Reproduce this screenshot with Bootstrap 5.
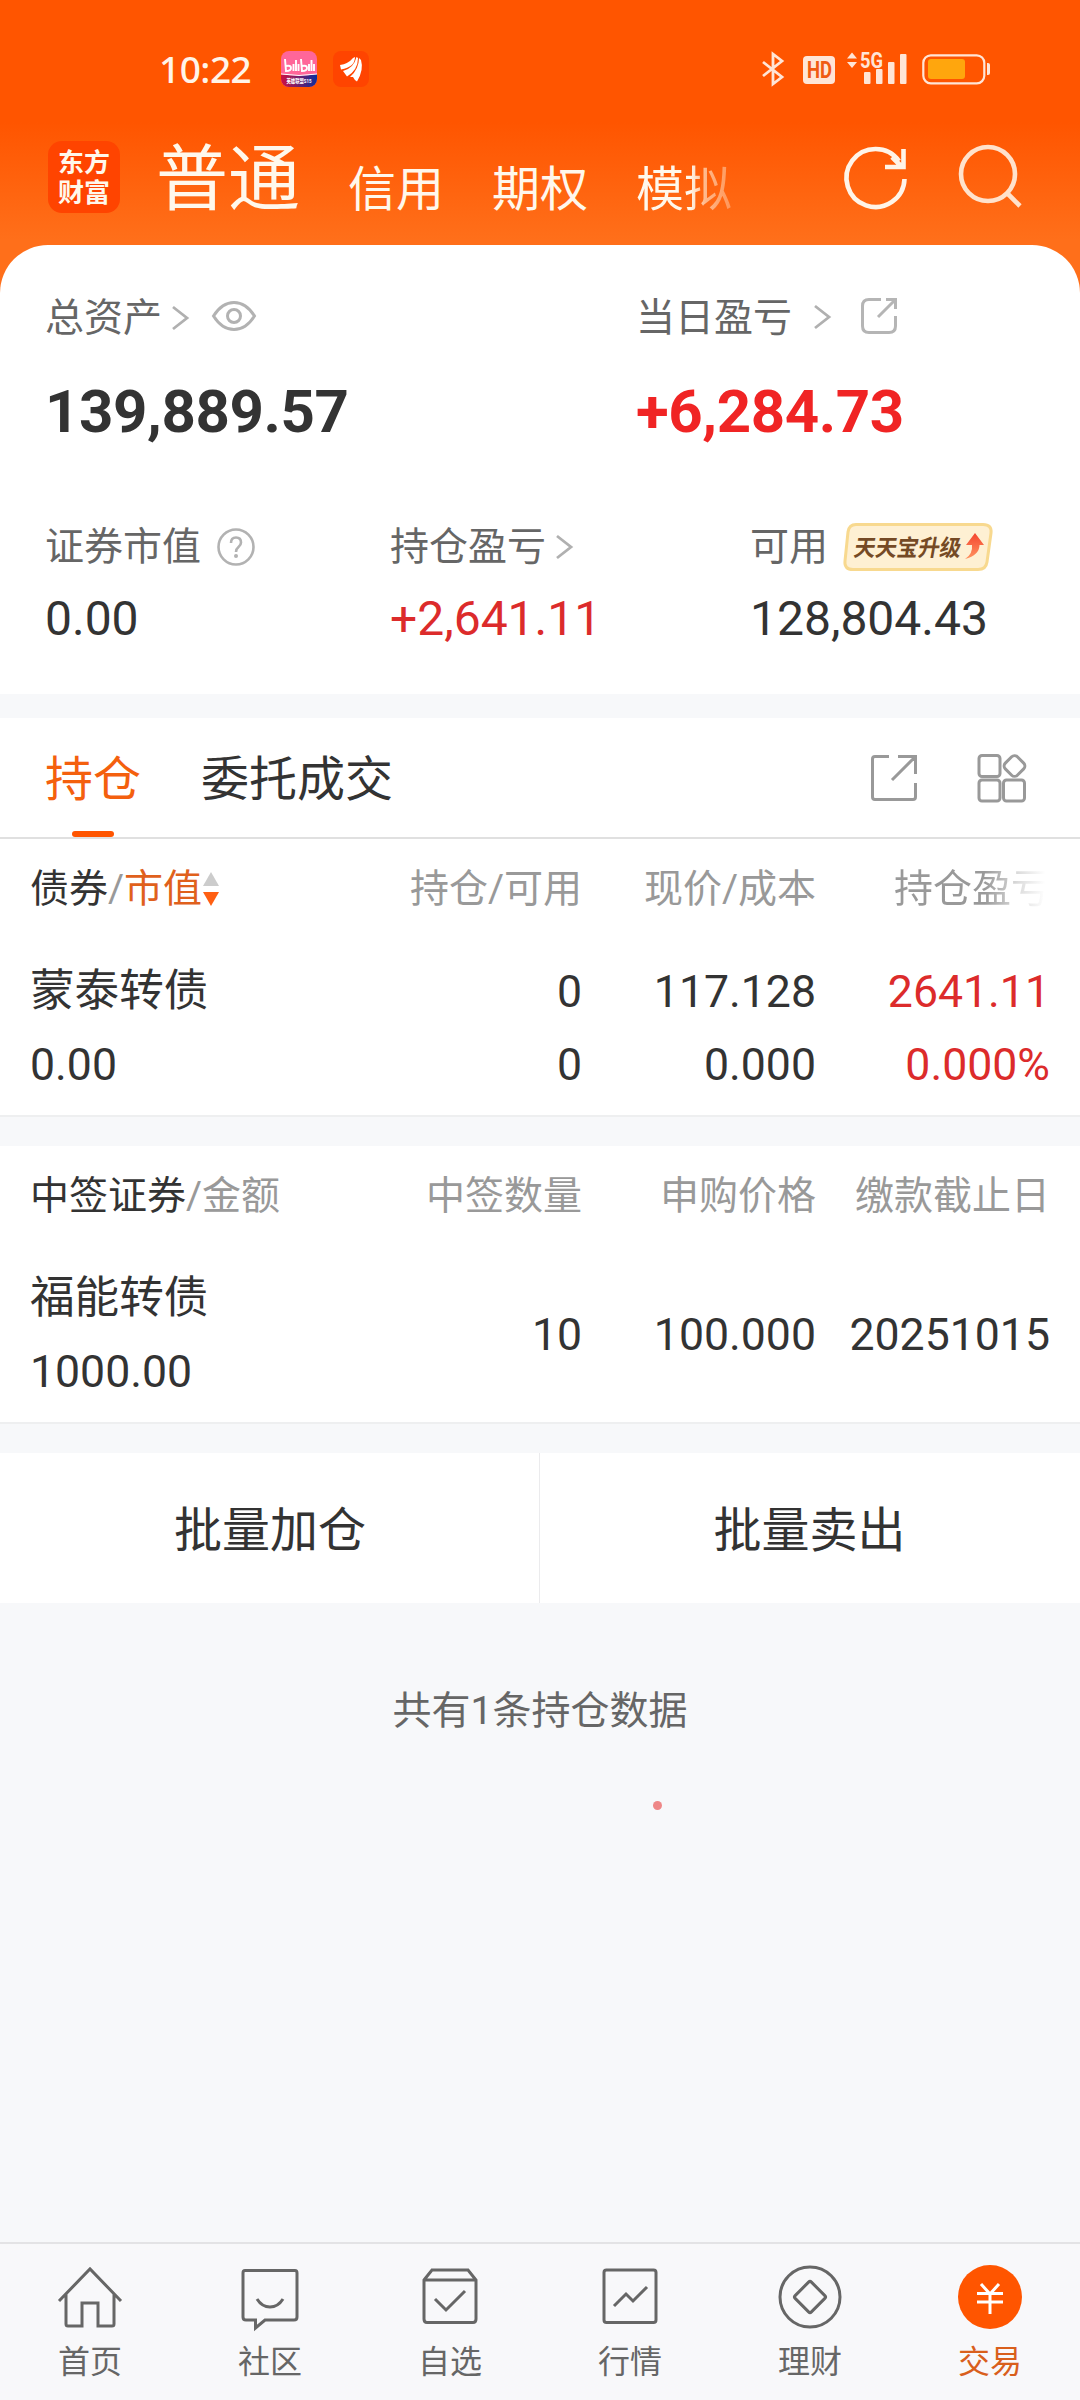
<!DOCTYPE html>
<html lang="zh-CN">
<head>
<meta charset="utf-8">
<meta name="viewport" content="width=device-width, initial-scale=1">
<title>交易</title>
<link href="https://cdn.jsdelivr.net/npm/bootstrap@5.3.0/dist/css/bootstrap.min.css" rel="stylesheet">
<style>
body{font-family:Roboto,"Noto Sans CJK SC",sans-serif;background:#f7f8fa;color:#333;width:1080px;height:2400px;font-size:39px;line-height:1;overflow:hidden;font-weight:400}
.app-top{height:245px;flex:none}
.app-shell{height:2400px;background:linear-gradient(#ff5500 0,#ff5500 122px,#ff6f1a 240px,#ff6f1a 300px,#f7f8fa 301px)}
.status-bar{height:86px;padding:51px 90px 0 159px;color:#fff4e8}
.clock{font:500 37px/36px "Noto Sans","Open Sans",sans-serif;width:122px;letter-spacing:-.5px}
.nav-row{height:159px;color:#fff8ec;padding:0 0 0 48px}
.brand-logo{width:72px;height:72px;border-radius:14px;background:#ff4400;font-size:26px;font-weight:700;line-height:30px;margin:55px 0 0;padding-top:7px;text-align:center}
.tab-main{font-size:72px;line-height:80px;margin:54px 0 0 36px;width:144px;white-space:nowrap}
.tab-sub{font-size:48px;line-height:56px;margin:76px 0 0 48px;width:96px;white-space:nowrap}
.tab-fade{background:linear-gradient(90deg,#fff8ec 56%,#ffb98c 72%,#ff9455 100%);-webkit-background-clip:text;background-clip:text;color:transparent}
.nav-icon-a{margin:59px 0 0 111px}.nav-icon-b{margin:59px 0 0 48px}
.sheet{height:449px;border-radius:48px 48px 0 0;background:#fff;flex:none;padding:52px 0 0 45px}
.col-total{width:591px}.col-a{width:345px}.col-b{width:360px}
.lbl{color:#666;height:42px;line-height:42px}
.sub-row{margin-top:84px}
.big-num{font-weight:700;font-size:60px;line-height:60px;margin-top:43px;letter-spacing:-.4px}
.mid-num{font-size:48px;line-height:48px;margin-top:27px}
.up{color:#dc2b2b}.up-strong{color:#f02424}
.gap-band{flex:none;background:#f7f8fa}
.gap-line{height:31px;border-top:2px solid #eeeff0}
.gap-top{height:24px}
.tab-strip{height:121px;border-bottom:2px solid #e0e0e0;flex:none;font-size:48px;padding:0 53px 0 45px;background:#fff}
.tab-txt{padding-top:5px}
.tab-active{color:#f4600e;position:relative}
.tab-active::after{content:"";position:absolute;left:27px;bottom:0;width:42px;height:6px;border-radius:3px;background:#ff5500}
.hold-table{display:grid;grid-template-columns:1fr 240px 234px 234px;background:#fff;padding:29px 30px 0;flex:none;height:276px;grid-template-rows:102px 73px 60px}
.hold-table>div{text-align:right;white-space:nowrap}
.hold-table>.c1{text-align:left}
.th{color:#999;line-height:42px;height:42px}
.td{font-size:44.600px;line-height:44px}
.nm{line-height:43px}
.td-mid{padding-top:36px}
.dk{color:#333}.og{color:#e0601c}
.fade-col{background:linear-gradient(90deg,#999 58%,#ddd 80%,#fff 97%);-webkit-background-clip:text;background-clip:text;color:transparent;width:156px;margin-left:auto}
.batch{height:150px;background:#fff;font-size:48px;flex:none}
.batch>div{width:50%;padding-top:6px}
.batch>div+div{border-left:1px solid #ebebed;margin-left:-1px}
.count-line{color:#666;margin-top:87px;line-height:42px}
.red-dot{width:9px;height:9px;border-radius:50%;background:#ee8787;margin:69px 0 0 653px}
.tab-bar{height:158px;border-top:2px solid #e3e3e5;background:#f8f8fa;font-size:32px;color:#666}
.tab-bar>div{width:180px;padding-top:21px}
.tab-bar svg{display:block;margin:0 1px 15px 0}
.nav-on{color:#d95f1c}
svg{flex:none;overflow:visible}
</style>
<script src="https://cdn.jsdelivr.net/npm/bootstrap@5.3.0/dist/js/bootstrap.bundle.min.js"></script>
</head>
<body>
<div class="app-shell d-flex flex-column">
 <header class="app-top">
  <div class="status-bar d-flex">
   <span class="clock">10:22</span>
   <svg width="36" height="36" viewBox="0 0 36 36"><defs><linearGradient id="bb"><stop offset="0" stop-color="#d01040"/><stop offset="1" stop-color="#0a2f9c"/></linearGradient><clipPath id="rc"><rect width="36" height="36" rx="8"/></clipPath></defs><g clip-path="url(#rc)"><rect width="36" height="36" fill="#ff6699"/><path d="M0 23q18 3 36 0v13H0z" fill="url(#bb)"/><path d="M0 23q18 3 36 0" stroke="#fff" fill="none"/></g><g fill="none" stroke="#fff" stroke-width="1.9"><path d="M4 8l1 12q5 0 5-3t-5-2M12.500 13v7M15 9v11M17.500 13v7M20 8l1 12q5 0 5-3t-5-2M28 13v7M30.500 9v11M33 13v7"/></g><text x="18" y="32" font-size="6" font-weight="700" fill="#fff" text-anchor="middle" textLength="25" lengthAdjust="spacingAndGlyphs">英雄联盟S15</text></svg>
   <svg class="ms-3" width="36" height="36" viewBox="0 0 36 36"><rect width="36" height="36" rx="8" fill="#ff4400"/><path fill="#fff" d="M7 14Q15 13 20 7L22 6Q22 16 8 18.500ZM10 20Q21 17 23.500 6L25 7Q25 19 14 25.500ZM17 26Q26 18 26 7L28 9Q31 19 24 30.500Q22 30 20 26Z"/></svg>
   <svg class="ms-auto" width="228" height="36" viewBox="0 0 228 36"><g fill="none" stroke="#ffe5d6" stroke-width="2.800"><path d="M1 11L20 26L11 33V3L20 10L1 25"/><rect x="161.300" y="4.300" width="61" height="28" rx="7.500" stroke-width="2.200"/></g><g fill="#ffe5d6"><rect x="41" y="5" width="32" height="28" rx="4"/><path d="M85 7.500L90 1.500L95 7.500ZM85 11L90 17L95 11Z"/><rect x="102" y="21" width="6.500" height="12" rx="1"/><rect x="114" y="18" width="6.500" height="15" rx="1"/><rect x="126" y="11" width="6.500" height="22" rx="1"/><rect x="138" y="3" width="6.500" height="30" rx="1"/><path d="M225 12h1q2 0 2 2v8q0 2-2 2h-1z"/><text x="98" y="17" font-size="22" font-weight="700" textLength="23" lengthAdjust="spacingAndGlyphs">5G</text></g><text x="45" y="27" font-size="23" font-weight="700" fill="#f05a12" textLength="25" lengthAdjust="spacingAndGlyphs">HD</text><rect x="166" y="8" width="37" height="20" rx="3" fill="#ffa60d"/></svg>
  </div>
  <div class="nav-row d-flex">
   <div class="brand-logo">东方<br>财富</div>
   <div class="tab-main">普通</div>
   <div class="tab-sub">信用</div><div class="tab-sub">期权</div><div class="tab-sub tab-fade">模拟</div>
   <svg class="nav-icon-a" width="66" height="66" viewBox="0 0 66 66" fill="none" stroke="#fff4e8" stroke-width="4.600"><path d="M61.500 34A29 29 0 1 1 56 16M60.500 4V22H42M49 12L59 22"/></svg>
   <svg class="nav-icon-b" width="66" height="66" viewBox="0 0 66 66" fill="none" stroke="#ffe2cc" stroke-width="4.600"><circle cx="31" cy="29" r="27"/><path d="M49 47L63 61"/></svg>
  </div>
 </header>
 <section class="sheet">
  <div class="d-flex">
   <div class="col-total">
    <div class="lbl d-flex align-items-center">总资产<svg style="margin-left:10px" width="16" height="24" viewBox="0 0 16 24" fill="none" stroke="#b0b0b0" stroke-width="2.800"><path d="M1 1L15 12L1 23"/></svg><svg style="margin:-5px 0 0 24px" width="44" height="30" viewBox="0 0 44 30" fill="none" stroke="#b2b2b2" stroke-width="3"><path d="M1.500 15Q10 1.500 22 1.500T42.500 15Q34 28.500 22 28.500T1.500 15Z"/><circle cx="22" cy="15" r="6.500"/></svg></div>
    <div class="big-num">139,889.57</div>
   </div>
   <div>
    <div class="lbl d-flex align-items-center">当日盈亏<svg style="margin:-3px 0 0 22px" width="16" height="24" viewBox="0 0 16 24" fill="none" stroke="#b0b0b0" stroke-width="2.800"><path d="M1 1L15 12L1 23"/></svg><svg style="margin:-4px 0 0 30px" width="38" height="38" viewBox="0 0 38 38" fill="none" stroke="#b5b5b5" stroke-width="3"><path d="M21 2.500H9Q2.500 2.500 2.500 9V29Q2.500 35.500 9 35.500H29Q35.500 35.500 35.500 29V19M26 2.500H35.500V12M35.500 2.500L18 20"/></svg></div>
    <div class="big-num up-strong">+6,284.73</div>
   </div>
  </div>
  <div class="d-flex sub-row">
   <div class="col-a"><div class="lbl d-flex align-items-center">证券市值<svg style="margin-left:16px" width="38" height="38" viewBox="0 0 38 38"><circle cx="19" cy="19" r="17.500" fill="none" stroke="#b2b2b2" stroke-width="2.600"/><path d="M14 15Q14 9.500 19 9.500T24 14.500Q24 17 21.500 19T19 24" fill="none" stroke="#b2b2b2" stroke-width="2.600"/><circle cx="19" cy="28" r="2" fill="#b2b2b2"/></svg></div></div>
   <div class="col-b"><div class="lbl d-flex align-items-center">持仓盈亏<svg style="margin-left:10px" width="16" height="24" viewBox="0 0 16 24" fill="none" stroke="#b0b0b0" stroke-width="2.800"><path d="M1 1L15 12L1 23"/></svg></div></div>
   <div class="lbl d-flex align-items-center">可用<svg style="margin-left:15px" width="150" height="50" viewBox="0 0 150 50"><defs><linearGradient id="ar" x2="0" y2="1"><stop stop-color="#f4452f"/><stop offset="1" stop-color="#ff9360"/></linearGradient></defs><path d="M13 2.500H140Q149 2.500 148 11L144 40Q143 47.500 135 47.500H10Q1 47.500 2 39L5 10Q6 2.500 13 2.500Z" fill="#fef0d3" stroke="#f8d98f" stroke-width="3"/><text transform="translate(10 33.500) skewX(-10)" font-size="23" font-weight="700" fill="#754a25" textLength="107" lengthAdjust="spacingAndGlyphs">天天宝升级</text><path d="M132 11L141 23H136.500Q136.500 33 122 37Q130 32 129 23H123Z" fill="url(#ar)"/></svg></div>
  </div>
  <div class="d-flex mid-num">
   <div class="col-a">0.00</div><div class="col-b up">+2,641.11</div><div>128,804.43</div>
  </div>
 </section>
 <div class="gap-band gap-top"></div>
 <div class="tab-strip d-flex align-items-stretch">
  <div class="tab-active tab-txt d-flex align-items-center">持仓</div>
  <div class="tab-txt d-flex align-items-center" style="margin-left:60px">委托成交</div>
  <div class="d-flex align-items-center ms-auto">
   <svg width="48" height="48" viewBox="0 0 48 48" fill="none" stroke="#999" stroke-width="3"><path d="M19 2.500H5Q2.500 2.500 2.500 5V43Q2.500 45.500 5 45.500H43Q45.500 45.500 45.500 43V29M28 2.500H45.500V20M45.500 2.500L22 26"/></svg>
   <svg style="margin-left:59px" width="50" height="50" viewBox="0 0 50 50" fill="none" stroke="#999" stroke-width="3"><rect x="2" y="2.500" width="21" height="21" rx="3"/><rect x="2" y="27" width="21" height="21" rx="3"/><rect x="26.500" y="27" width="21" height="21" rx="3"/><rect x="29" y="4.500" width="17" height="17" rx="4" transform="rotate(45 37.500 13)"/></svg>
  </div>
 </div>
 <div class="hold-table">
  <div class="c1 th d-flex align-items-center"><span class="dk">债券</span>/<span class="og">市值</span><svg width="18" height="36" viewBox="0 0 18 36"><path d="M1 15L9 1L17 15Z" fill="#ccc"/><path d="M1 21L9 35L17 21Z" fill="#ff5f12"/></svg></div>
  <div class="th">持仓/可用</div><div class="th">现价/成本</div><div class="th fade-col">持仓盈亏</div>
  <div class="c1 td nm">蒙泰转债</div><div class="td">0</div><div class="td">117.128</div><div class="td up">2641.11</div>
  <div class="c1 td">0.00</div><div class="td">0</div><div class="td">0.000</div><div class="td up">0.000%</div>
 </div>
 <div class="gap-band gap-line"></div>
 <div class="hold-table">
  <div class="c1 th"><span class="dk">中签证券</span>/金额</div><div class="th">中签数量</div><div class="th">申购价格</div><div class="th">缴款截止日</div>
  <div class="c1 td nm">福能转债</div><div class="td td-mid">10</div><div class="td td-mid">100.000</div><div class="td td-mid">20251015</div>
  <div class="c1 td">1000.00</div>
 </div>
 <div class="gap-band gap-line"></div>
 <div class="batch d-flex"><div class="d-flex align-items-center justify-content-center">批量加仓</div><div class="d-flex align-items-center justify-content-center">批量卖出</div></div>
 <div class="count-line text-center">共有1条持仓数据</div>
 <div class="red-dot"></div>
 <nav class="tab-bar d-flex mt-auto text-center">
  <div class="d-flex flex-column align-items-center"><svg width="66" height="66" viewBox="0 0 66 66" fill="none" stroke="#666" stroke-width="3"><path d="M2 36L33 4L64 36M9 29V59Q9 61 11 61H25V38H41V61H55Q57 61 57 59V29"/></svg>首页</div>
  <div class="d-flex flex-column align-items-center"><svg width="66" height="66" viewBox="0 0 66 66" fill="none" stroke="#666" stroke-width="3"><path d="M8 5.500H58Q60 5.500 60 8V52Q60 55 57 55H28L18.500 63V55H9Q6 55 6 52V8Q6 5.500 8 5.500ZM20 34Q25 42 33 42T46 34"/></svg>社区</div>
  <div class="d-flex flex-column align-items-center"><svg width="66" height="66" viewBox="0 0 66 66" fill="none" stroke="#666" stroke-width="3"><path d="M7 15L15 5H51L59 15V54Q59 57.500 56 57.500H10Q7 57.500 7 54ZM7 15H59M18 34L29 45L48 26"/></svg>自选</div>
  <div class="d-flex flex-column align-items-center"><svg width="66" height="66" viewBox="0 0 66 66" fill="none" stroke="#666" stroke-width="3"><rect x="7" y="5" width="52" height="52.500" rx="2.500"/><path d="M17 41L29 29L36 36L50 22"/></svg>行情</div>
  <div class="d-flex flex-column align-items-center"><svg width="66" height="66" viewBox="0 0 66 66" fill="none" stroke="#666" stroke-width="3"><circle cx="33" cy="32" r="30"/><rect x="21.500" y="20.500" width="23" height="23" rx="2" transform="rotate(45 33 32)"/></svg>理财</div>
  <div class="nav-on d-flex flex-column align-items-center"><svg width="66" height="66" viewBox="0 0 66 66" fill="none" stroke="#fff" stroke-width="3"><circle cx="33" cy="32" r="32" fill="#ff5500" stroke="none"/><path d="M24 19L33 29L42 19M20 28.500H46M20 37H46M33 28V49"/></svg>交易</div>
 </nav>
</div>
</body>
</html>
